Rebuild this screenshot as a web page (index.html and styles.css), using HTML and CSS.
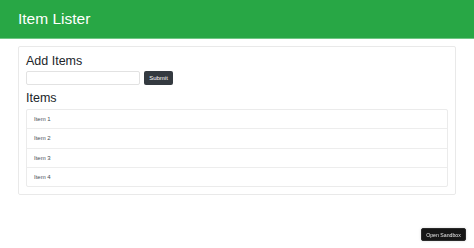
FILE: index.html
```html
<!DOCTYPE html>
<html lang="en">
<head>
    <meta charset="UTF-8">
    <meta name="viewport" content="width=device-width, initial-scale=1.0">
    <title>Item Lister</title>
    <link rel="stylesheet" href="styles.css">
</head>
<body>
    <header class="header">
        <h1 class="header-title">Item Lister</h1>
    </header>

    <div class="main">
        <div class="card">
            <h2 class="card-title">Add Items</h2>
            <form class="add-form" onsubmit="return false;">
                <input class="add-input" type="text">
                <button class="submit-button" type="submit">Submit</button>
            </form>

            <h2 class="card-title items-title">Items</h2>
            <ul class="item-list">
                <li class="item">Item 1</li>
                <li class="item">Item 2</li>
                <li class="item">Item 3</li>
                <li class="item">Item 4</li>
            </ul>
        </div>
    </div>

    <!-- sandbox overlay button -->
    <button class="sandbox-button">Open Sandbox</button>
</body>
</html>
```

FILE: styles.css
```css
body {
    margin: 0;
    padding: 0;
    font-family: "Liberation Sans", Arial, sans-serif;
    background-color: #ffffff;
    color: #212529;
}

.header {
    height: 38px;
    background-color: #28a745;
    border-bottom: 1px solid #6fc784;
    display: flex;
    align-items: center;
    padding: 0 18px;
}

.header-title {
    margin: 0;
    font-size: 15.5px;
    font-weight: normal;
    color: #ffffff;
}

.main {
    margin: 7px 18px 0;
}

.card {
    border: 1px solid #e9e9e9;
    border-radius: 2px;
    padding: 7px;
}

.card-title {
    margin: 0;
    font-size: 12.5px;
    line-height: 15px;
    font-weight: normal;
    color: #212529;
}

.add-form {
    display: flex;
    gap: 4px;
    margin-top: 2px;
}

.add-input {
    box-sizing: border-box;
    width: 114px;
    height: 14px;
    border: 1px solid #e2e2e2;
    border-radius: 2px;
    padding: 0 4px;
}

.submit-button {
    box-sizing: border-box;
    height: 14px;
    width: 29px;
    padding: 0;
    border: none;
    border-radius: 2px;
    background-color: #343a40;
    color: #ffffff;
    font-family: "Liberation Sans", Arial, sans-serif;
    font-size: 6px;
}

.items-title {
    margin-top: 6px;
}

.item-list {
    list-style: none;
    margin: 3px 0 0;
    padding: 0;
    border: 1px solid #ebebeb;
    border-radius: 2px;
}

.item {
    height: 18.25px;
    display: flex;
    align-items: center;
    padding: 0 7px;
    font-size: 6px;
    color: #495057;
    border-bottom: 1px solid #ededed;
}

.item:last-child {
    border-bottom: none;
}

.sandbox-button {
    position: fixed;
    right: 8px;
    bottom: 7px;
    width: 45px;
    height: 13px;
    padding: 0;
    border: 1px solid #2a2a2a;
    border-radius: 2px;
    background-color: #151515;
    color: #e6e6e6;
    font-family: "Liberation Sans", Arial, sans-serif;
    font-size: 5.2px;
    box-shadow: 0 0 3px rgba(0, 0, 0, 0.15);
}
```
